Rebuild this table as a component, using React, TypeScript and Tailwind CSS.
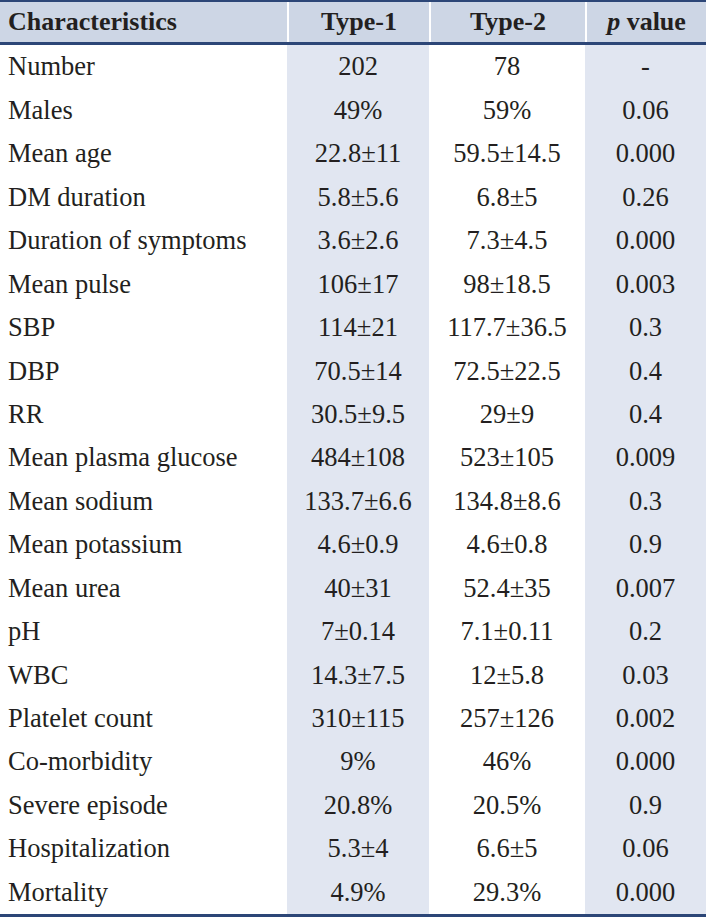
import React from "react";

const rows: [string, string, string, string][] = [
  ["Number", "202", "78", "-"],
  ["Males", "49%", "59%", "0.06"],
  ["Mean age", "22.8±11", "59.5±14.5", "0.000"],
  ["DM duration", "5.8±5.6", "6.8±5", "0.26"],
  ["Duration of symptoms", "3.6±2.6", "7.3±4.5", "0.000"],
  ["Mean pulse", "106±17", "98±18.5", "0.003"],
  ["SBP", "114±21", "117.7±36.5", "0.3"],
  ["DBP", "70.5±14", "72.5±22.5", "0.4"],
  ["RR", "30.5±9.5", "29±9", "0.4"],
  ["Mean plasma glucose", "484±108", "523±105", "0.009"],
  ["Mean sodium", "133.7±6.6", "134.8±8.6", "0.3"],
  ["Mean potassium", "4.6±0.9", "4.6±0.8", "0.9"],
  ["Mean urea", "40±31", "52.4±35", "0.007"],
  ["pH", "7±0.14", "7.1±0.11", "0.2"],
  ["WBC", "14.3±7.5", "12±5.8", "0.03"],
  ["Platelet count", "310±115", "257±126", "0.002"],
  ["Co-morbidity", "9%", "46%", "0.000"],
  ["Severe episode", "20.8%", "20.5%", "0.9"],
  ["Hospitalization", "5.3±4", "6.6±5", "0.06"],
  ["Mortality", "4.9%", "29.3%", "0.000"],
];

export default function App() {
  return (
    <div
      className="w-[706px] h-[917px] bg-white text-[#231f20] text-[26.5px] leading-none"
      style={{ fontFamily: '"Liberation Serif", serif' }}
    >
      <div className="border-t-2 border-b-[3px] border-[#2c4677] bg-[#cdd6e5] grid grid-cols-[287px_142px_156px_121px] h-[45px] font-bold text-[26px]">
        <div className="flex items-center pl-2">Characteristics</div>
        <div className="flex items-center justify-center border-l-2 border-white">Type-1</div>
        <div className="flex items-center justify-center border-l-2 border-white">Type-2</div>
        <div className="flex items-center justify-center border-l-2 border-white">
          <span className="italic">p</span>&nbsp;value
        </div>
      </div>
      <div className="grid grid-cols-[287px_142px_156px_121px] border-b-[3px] border-[#2c4677]">
        {rows.map((r, i) => (
          <React.Fragment key={i}>
            <div className="h-[43.45px] flex items-center pl-2">{r[0]}</div>
            <div className="h-[43.45px] flex items-center justify-center bg-[#e1e6f1]">{r[1]}</div>
            <div className="h-[43.45px] flex items-center justify-center">{r[2]}</div>
            <div className="h-[43.45px] flex items-center justify-center bg-[#e1e6f1]">{r[3]}</div>
          </React.Fragment>
        ))}
      </div>
    </div>
  );
}
